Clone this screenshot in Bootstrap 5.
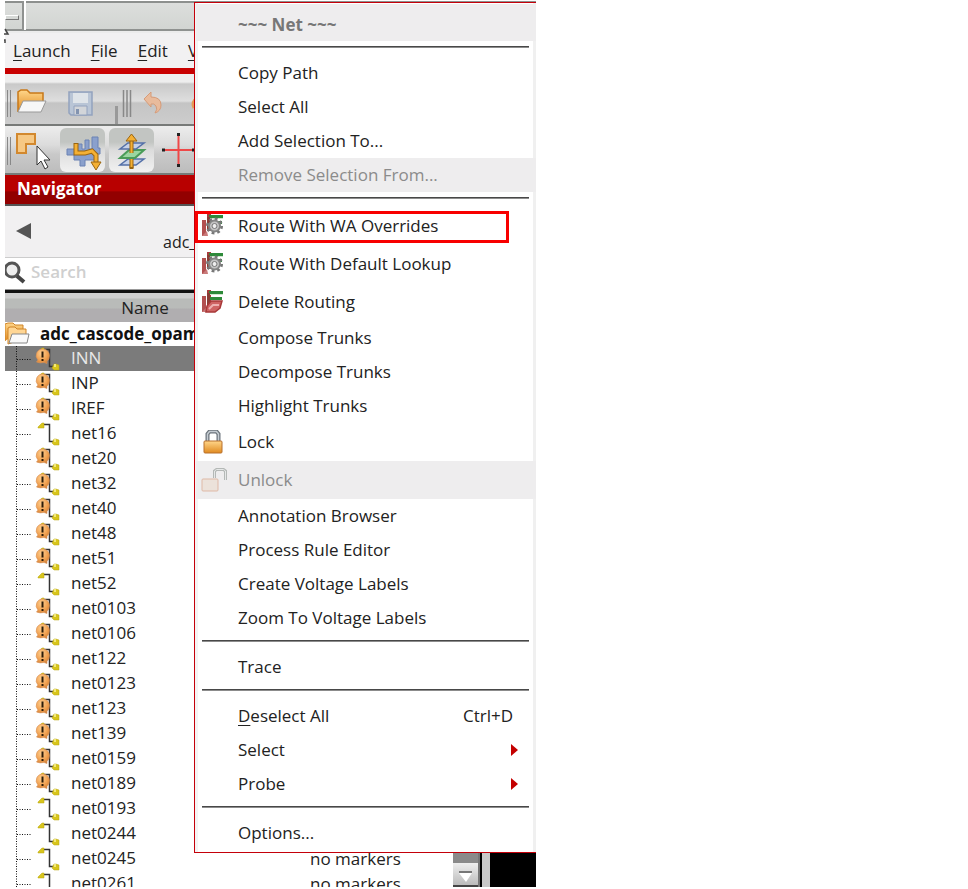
<!DOCTYPE html>
<html lang="en">
<head>
<meta charset="utf-8">
<meta name="viewport" content="width=device-width, initial-scale=1">
<title>adc_cascode_opamp</title>
<link href="https://cdn.jsdelivr.net/npm/bootstrap@5.3.0/dist/css/bootstrap.min.css" rel="stylesheet">
<style>
  body { font-family: "Open Sans", "Noto Sans", sans-serif; font-size: 17px; line-height: 24px; color: #222; background: #fff; }
  .shell { max-width: 536px; padding: 1px 0 2px 5px; }
  .titlebar { height: 32px; background: linear-gradient(#8d908e 0 2px, #dcdedc 2px, #d2d5d2 28px, #8f9290 28px 30px, #ececec 30px); }
  .min-btn { width: 21px; height: 29px; border: 0; border-right: 2px solid #fff; box-shadow: inset -2px 0 #8f9290; background: transparent; }
  .min-btn span { width: 14px; height: 5px; margin-top: 4px; border: 1px solid #fff; border-right-color: #777; border-bottom-color: #777; }
  .menubar { height: 35px; background: #f2f1f2; padding: 6px 8px; gap: 20px; }
  .menubar a { color: #222; text-decoration: none; white-space: nowrap; }
  u { text-decoration-thickness: 1px; text-underline-offset: 3px; }
  .redline { height: 6px; background: #c80000; }
  .tools-files { height: 52px; padding: 12px 0 0 1px; background: linear-gradient(#eeeeee 0 8px, #c9c9c9 10px, #dedede 54%, #c4c4c4 58%, #cdcdcd); border-bottom: 2px solid #777a78; }
  .tools-edit { height: 49px; padding: 0 0 0 1px; background: linear-gradient(#ededed, #dcdcdc 40%, #c9c9c9 60%, #bcbcbc); border-bottom: 2px solid #777a78; }
  .tool { border: 0; background: transparent; padding: 0; }
  .tool-on { background: linear-gradient(#c2c5c2 0 32%, #dcdcdc 50%, #f1f1f1); border-radius: 6px; width: 45px; height: 44px; }
  .nav-title { height: 31px; font-weight: 700; color: #fff; padding: 2px 12px; background: linear-gradient(#b80000 0 55%, #920000 58%); border-bottom: 2px solid #555; }
  .crumbs { height: 52px; background: #f1f0f1; border-bottom: 1px solid #ccc; }
  .crumbs button { border: 0; background: transparent; padding: 0; margin: 15px 0 0 11px; }
  .crumb-name { margin-left: 131px; margin-top: 24px; font-size: 16px; }
  .search { height: 32px; padding-bottom: 4px; border-bottom: 1px solid #999; }
  .search input { border: 0; outline: 0; width: 100%; font-weight: 600; padding: 0 4px; background: transparent; }
  .search input::placeholder { color: #cfcfcf; opacity: 1; }
  .browser { border-top: 3px solid #111; }
  .tree { width: 448px; border-collapse: collapse; table-layout: fixed; flex: none; }
  .tree th { height: 29px; padding: 0; font-weight: 400; text-align: center; background: linear-gradient(#cfcfcf 0 5px, #b9bbb9 6px 15px, #b0aeb0 16px); }
  .tree td { height: 25px; padding: 0; line-height: 24px; white-space: nowrap; }
  .tree th:first-child { width: 280px; }
  .tree td + td { padding-left: 25px; }
  .tree svg { display: block; flex: none; }
  .tree .picked { background: #7b7b7b; color: #e8e8e8; }
  .tree .root { height: 24px; font-weight: 700; color: #111; }
  .net-name { margin-left: 5px; }
  .vbar { width: 25px; background: #8a8a8a; flex: none; }
  .vbar button { border: 0; padding: 0; height: 24px; background: linear-gradient(#eee, #bbb); border-bottom: 2px solid #444; }
  .splitter { width: 12px; background: linear-gradient(90deg, #777 0 2px, #000 2px 4px, #c8c8c8 4px 12px); flex: none; }
  .popup { position: absolute; top: 2px; left: 194px; right: 0; background: #fff; border: 1px solid #c4000a; border-right: 0; padding: 1px 0 2px 1px; box-shadow: inset -3px 0 #f0f0f0, inset 3px 0 #f4f4f4; }
  .entry { display: flex; align-items: center; width: 100%; height: 34px; border: 0; background: transparent; padding: 0 23px 0 42px; color: #222; text-align: left; position: relative; white-space: nowrap; }
  .entry-pic { height: 38px; padding-left: 5px; }
  .entry-pic svg { margin-right: 11px; flex: none; }
  .entry-sub { padding-right: 18px; }
  .entry:disabled { background: #eeedee; color: #8b8b8b; }
  .entry-title { height: 37px; font-weight: 700; padding-top: 4px; }
  .entry-title:disabled { color: #777; }
  .rule { height: 2px; margin: 5px 7px 8px 6px; background: linear-gradient(#484848 50%, #8c8c8c 50%); border: 0; opacity: 1; }
  .callout { position: absolute; inset: 4px 27px 2px -1px; border: 3px solid #f80000; }
  .residue { position: absolute; left: 4px; top: 28px; }
</style>
<script src="https://cdn.jsdelivr.net/npm/bootstrap@5.3.0/dist/js/bootstrap.bundle.min.js"></script>
</head>
<body>
<svg width="0" height="0" class="position-absolute" aria-hidden="true">
  <defs>
    <linearGradient id="gold" x1="0" y1="0" x2="0" y2="1"><stop offset="0" stop-color="#ffd68a"/><stop offset="1" stop-color="#e08a20"/></linearGradient>
    <radialGradient id="ball" cx=".4" cy=".3" r=".8"><stop offset="0" stop-color="#ffcf90"/><stop offset=".6" stop-color="#f0a050"/><stop offset="1" stop-color="#c87830"/></radialGradient>
    <g id="net">
      <path d="M8 3.500H14.500V20.500H19" fill="none" stroke="#333" stroke-width="1.500"/>
      <path d="M3 6l4-4h2v5H3zM17 22l2-4h2l3 1v5h-5z" fill="#d8c51c" stroke="#b8a414" stroke-width=".5"/>
      <path d="M19 18h2v3h-2z" fill="#f2e87a"/>
    </g>
    <g id="branch"><path d="M11.500 0V25M12 13.500H27" fill="none" stroke="#111" stroke-width="1" stroke-dasharray="1 1.500"/></g>
    <g id="alert">
      <path d="M8 0a6.500 6.500 0 0 1 6.500 6.500q0 4-2.500 6v2l-3-1q-4 1-7.500-.5l1.500-2A6.500 6.500 0 0 1 8 0z" fill="url(#ball)" stroke="#d8925a" stroke-width=".6"/>
      <path d="M7.500 2.500v6M7.500 10v2" stroke="#2a1a08" stroke-width="2"/>
    </g>
    <g id="route">
      <path d="M1 6h4v16H1z" fill="#b25050"/><path d="M6 0h4v17H6z" fill="#a83c3c"/>
      <path d="M8 1h14v3H8zM9 7h12v3H9z" fill="#2e8a3a"/><path d="M8 4h14v1H8z" fill="#cfe8cf"/><path d="M6 3h3v12H6z" fill="#8a3c34"/>
      <path d="M1 22h6l-1-5z" fill="#c97a7a"/>
    </g>
    <g id="gear">
      <circle cx="13.500" cy="12" r="7" fill="none" stroke="#777" stroke-width="3" stroke-dasharray="2.700 2.800"/>
      <circle cx="13.500" cy="12" r="5.500" fill="#c4c4c4" stroke="#858585" stroke-width="2"/>
      <circle cx="13.500" cy="12" r="2.500" fill="#eee" stroke="#777"/>
    </g>
  </defs>
</svg>
<main class="shell position-relative vh-100 overflow-hidden d-flex flex-column">
  <div class="titlebar d-flex flex-shrink-0"><button class="min-btn p-0 d-flex align-items-center" aria-label="Minimize"><span></span></button></div>
  <svg class="residue" width="6" height="16" aria-hidden="true"><path d="M1 1l3 5H0M0 12h1v3" fill="none" stroke="#444" stroke-width="1.500"/></svg>
  <nav class="menubar d-flex flex-shrink-0 overflow-hidden"><a href="#"><u>L</u>aunch</a><a href="#"><u>F</u>ile</a><a href="#"><u>E</u>dit</a><a href="#"><u>V</u>iew</a></nav>
  <div class="redline flex-shrink-0"></div>

  <div class="tools-files d-flex align-items-start flex-shrink-0 overflow-hidden">
    <svg width="6" height="32" class="flex-shrink-0"><path d="M1.500 4v27M4.500 4v27" stroke="#888"/></svg>
    <button class="tool" aria-label="Open"><svg width="36" height="32"><path d="M6 26V6l3-2h6l3 3h13v10" fill="url(#gold)" stroke="#c87818" stroke-width="1.500"/><path d="M11 15h23l-5 11H6z" fill="#f7f7f7" stroke="#999"/></svg></button>
    <button class="tool ms-3" aria-label="Save" disabled><svg width="34" height="32"><path d="M5 6h23v23H7l-2-2z" fill="#b9c5d6" stroke="#93a2be" stroke-width="1.500"/><path d="M9 7h15v10H9z" fill="#dfe4e9"/><path d="M10 20h13v9H10z" fill="#d2d5d9" stroke="#93a2be"/><path d="M12 23h3v5h-3z" fill="#8293b0"/></svg></button>
    <svg width="31" height="42" class="ms-2 flex-shrink-0"><path d="M10.500 20v22" stroke="#999" stroke-width="3"/><path d="M17.500 4v27M21 4v27M24.500 4v27" stroke="#888" stroke-width="1.500"/></svg>
    <button class="tool ms-1" aria-label="Undo" disabled><svg width="22" height="32"><path d="M3 13L10 6v5q10 0 10 8 0 6-6 8 3-4 1-7-2-3-5-2v3z" fill="#e9bb9c" stroke="#d69b78"/></svg></button>
    <svg width="20" height="32" class="ms-3 flex-shrink-0"><path d="M18 12q-6 4-3 10" fill="none" stroke="#e59b55" stroke-width="3"/></svg>
  </div>

  <div class="tools-edit d-flex align-items-center flex-shrink-0 overflow-hidden">
    <svg width="6" height="40" class="flex-shrink-0"><path d="M1.500 7v28M4.500 7v28" stroke="#888"/></svg>
    <button class="tool" aria-label="Select shapes"><svg width="40" height="44"><path d="M5 6h18v10h-9v9H5z" fill="#f6c884" stroke="#d2882e" stroke-width="2"/><path d="M25 18v19l4-4 4 8 3-2-4-7h6z" fill="#fff" stroke="#333"/></svg></button>
    <button class="tool tool-on ms-2" aria-label="Route" aria-pressed="true"><svg width="44" height="42"><path d="M6 20h10v-5h5v5h3v-9h4v9h3V8h6v11h2v6h-3v6H24v6h-5v-6h-6v-5H6z" fill="#8aa0cc" stroke="#6a82b4"/><path d="M15 14v10h9l7-2 4 4v9" fill="none" stroke="#9a6510" stroke-width="5"/><path d="M15 15v9h9l7-2 4 4v9" fill="none" stroke="#f4b034" stroke-width="3"/><path d="M30 33h10l-5 8z" fill="#f4b034" stroke="#9a6510"/></svg></button>
    <button class="tool tool-on ms-1" aria-label="Layers" aria-pressed="true"><svg width="44" height="42"><path d="M21.500 40V32" stroke="#9a6510" stroke-width="4"/><path d="M10 36h16l8-6H18z" fill="#c5d1e9" stroke="#5470a8" stroke-width="1.500"/><path d="M21.500 39V12" stroke="#9a6510" stroke-width="4"/><path d="M21.500 38V12" stroke="#f4b034" stroke-width="2"/><path d="M10 29h15l9-8H19z" fill="#9ad6a0" stroke="#4a9c58" stroke-width="2"/><path d="M10 20h16l8-6H18z" fill="#c5d1e9" stroke="#5470a8" stroke-width="1.500"/><path d="M21.500 24V11" stroke="#9a6510" stroke-width="4"/><path d="M21.500 24V11" stroke="#f4b034" stroke-width="2"/><path d="M16 12l5.500-7 5.500 7z" fill="#f4b034" stroke="#9a6510"/></svg></button>
    <button class="tool ms-2" aria-label="Crosshair"><svg width="34" height="40"><path d="M1 20h32M16.500 4v32" stroke="#ee4848" stroke-width="2"/><path d="M0 18.500h3v3H0zM30 18.500h3v3h-3zM15 3h3v3h-3zM15 34h3v3h-3z" fill="#222"/></svg></button>
  </div>

  <div class="nav-title flex-shrink-0">Navigator</div>
  <div class="crumbs d-flex flex-shrink-0 align-items-start">
    <button class="lh-1" aria-label="Back"><svg width="16" height="18"><path d="M0 9L15 1v16z" fill="#555"/></svg></button>
    <span class="crumb-name">adc_</span>
  </div>
  <label class="search d-flex align-items-center flex-shrink-0">
    <svg width="22" height="26" class="flex-shrink-0" aria-hidden="true"><circle cx="7" cy="11" r="7" fill="#eee" stroke="#555" stroke-width="3"/><path d="M12 17l7 6" stroke="#444" stroke-width="4"/></svg>
    <input type="text" placeholder="Search" aria-label="Search">
  </label>

  <section class="browser d-flex flex-grow-1 overflow-hidden">
    <div class="overflow-hidden flex-shrink-0">
      <table class="tree">
        <thead><tr><th scope="col">Name</th><th scope="col" aria-label="Markers"></th></tr></thead>
        <tbody id="nets">
          <tr><td class="root" colspan="2"><div class="d-flex align-items-center"><svg width="35" height="24"><path d="M0 19V2l3-1h5l2 2h8v4" fill="url(#gold)" stroke="#cf8428"/><path d="M3 22V6l2-1h5l2 2h9v9z" fill="#ffd694" stroke="#cf8428"/><path d="M7 12h17l-2 9H4z" fill="#fafafa" stroke="#888"/></svg>adc_cascode_opamp</div></td></tr>
        </tbody>
      </table>
    </div>
    <div class="vbar d-flex flex-column justify-content-end"><button aria-label="Scroll down"><svg width="25" height="20"><path d="M6 6h13" stroke="#777" stroke-width="2"/><path d="M6 7h13l-6 9z" fill="#fff"/></svg></button></div>
    <div class="splitter"></div>
    <div class="flex-grow-1 bg-black"></div>
  </section>

  <div class="popup" role="menu">
    <button class="entry entry-title" disabled>~~~ Net ~~~</button>
    <hr class="rule">
    <button class="entry">Copy Path</button>
    <button class="entry">Select All</button>
    <button class="entry">Add Selection To...</button>
    <button class="entry" disabled>Remove Selection From...</button>
    <hr class="rule">
    <button class="entry entry-pic"><svg width="26" height="24"><use href="#route"/><use href="#gear"/></svg>Route With WA Overrides<span class="callout"></span></button>
    <button class="entry entry-pic"><svg width="26" height="24"><use href="#route"/><use href="#gear"/></svg>Route With Default Lookup</button>
    <button class="entry entry-pic"><svg width="26" height="24"><use href="#route"/><path d="M10 11h11l-2 7-5 4H5l1-6z" fill="#cf6464" stroke="#a83838" stroke-width="1.500"/><path d="M8 19l4-4h6" fill="none" stroke="#eeb0b0" stroke-width="2"/></svg>Delete Routing</button>
    <button class="entry">Compose Trunks</button>
    <button class="entry">Decompose Trunks</button>
    <button class="entry">Highlight Trunks</button>
    <button class="entry entry-pic"><svg width="26" height="24"><path d="M6.500 12V4l2-2.500h7l2 2.500v8" fill="none" stroke="#6d757c" stroke-width="4"/><path d="M6.500 12V4l2-2.500h7l2 2.500v8" fill="none" stroke="#c5ccd2" stroke-width="1.500"/><rect x="3" y="11" width="18" height="12" rx="1" fill="url(#gold)" stroke="#b8702c"/></svg>Lock</button>
    <button class="entry entry-pic" disabled><svg width="26" height="24"><path d="M13.500 10V3l2-1.500h7l2 1.500v9" fill="none" stroke="#b4b8b6" stroke-width="3"/><path d="M13.500 10V3l2-1.500h7l2 1.500v9" fill="none" stroke="#e6e8e8"/><rect x="1" y="11" width="16" height="12" rx="1" fill="#ece2da" stroke="#dfb9a6"/></svg>Unlock</button>
    <button class="entry">Annotation Browser</button>
    <button class="entry">Process Rule Editor</button>
    <button class="entry">Create Voltage Labels</button>
    <button class="entry">Zoom To Voltage Labels</button>
    <hr class="rule">
    <button class="entry">Trace</button>
    <hr class="rule">
    <button class="entry"><span><u>D</u>eselect All</span><span class="ms-auto">Ctrl+D</span></button>
    <button class="entry entry-sub">Select<svg class="ms-auto" width="10" height="14"><path d="M3 1l7 6-7 6z" fill="#c40000"/></svg></button>
    <button class="entry entry-sub">Probe<svg class="ms-auto" width="10" height="14"><path d="M3 1l7 6-7 6z" fill="#c40000"/></svg></button>
    <hr class="rule">
    <button class="entry">Options...</button>
  </div>
</main>
<script>
  const plain = ["net16", "net52", "net0193", "net0244", "net0245", "net0261"];
  const nets = "INN INP IREF net16 net20 net32 net40 net48 net51 net52 net0103 net0106 net122 net0123 net123 net139 net0159 net0189 net0193 net0244 net0245 net0261".split(" ");
  document.getElementById("nets").insertAdjacentHTML("beforeend", nets.map((n, i) =>
    `<tr class="${i ? "" : "picked"}"><td><div class="d-flex"><svg width="61" height="25"><use href="#branch"/><use href="#net" x="30"/>${plain.includes(n) ? "" : '<use href="#alert" x="30" y="3"/>'}</svg><span class="net-name">${n}</span></div></td><td>${i > 19 ? "no markers" : ""}</td></tr>`).join(""));
</script>
</body>
</html>
